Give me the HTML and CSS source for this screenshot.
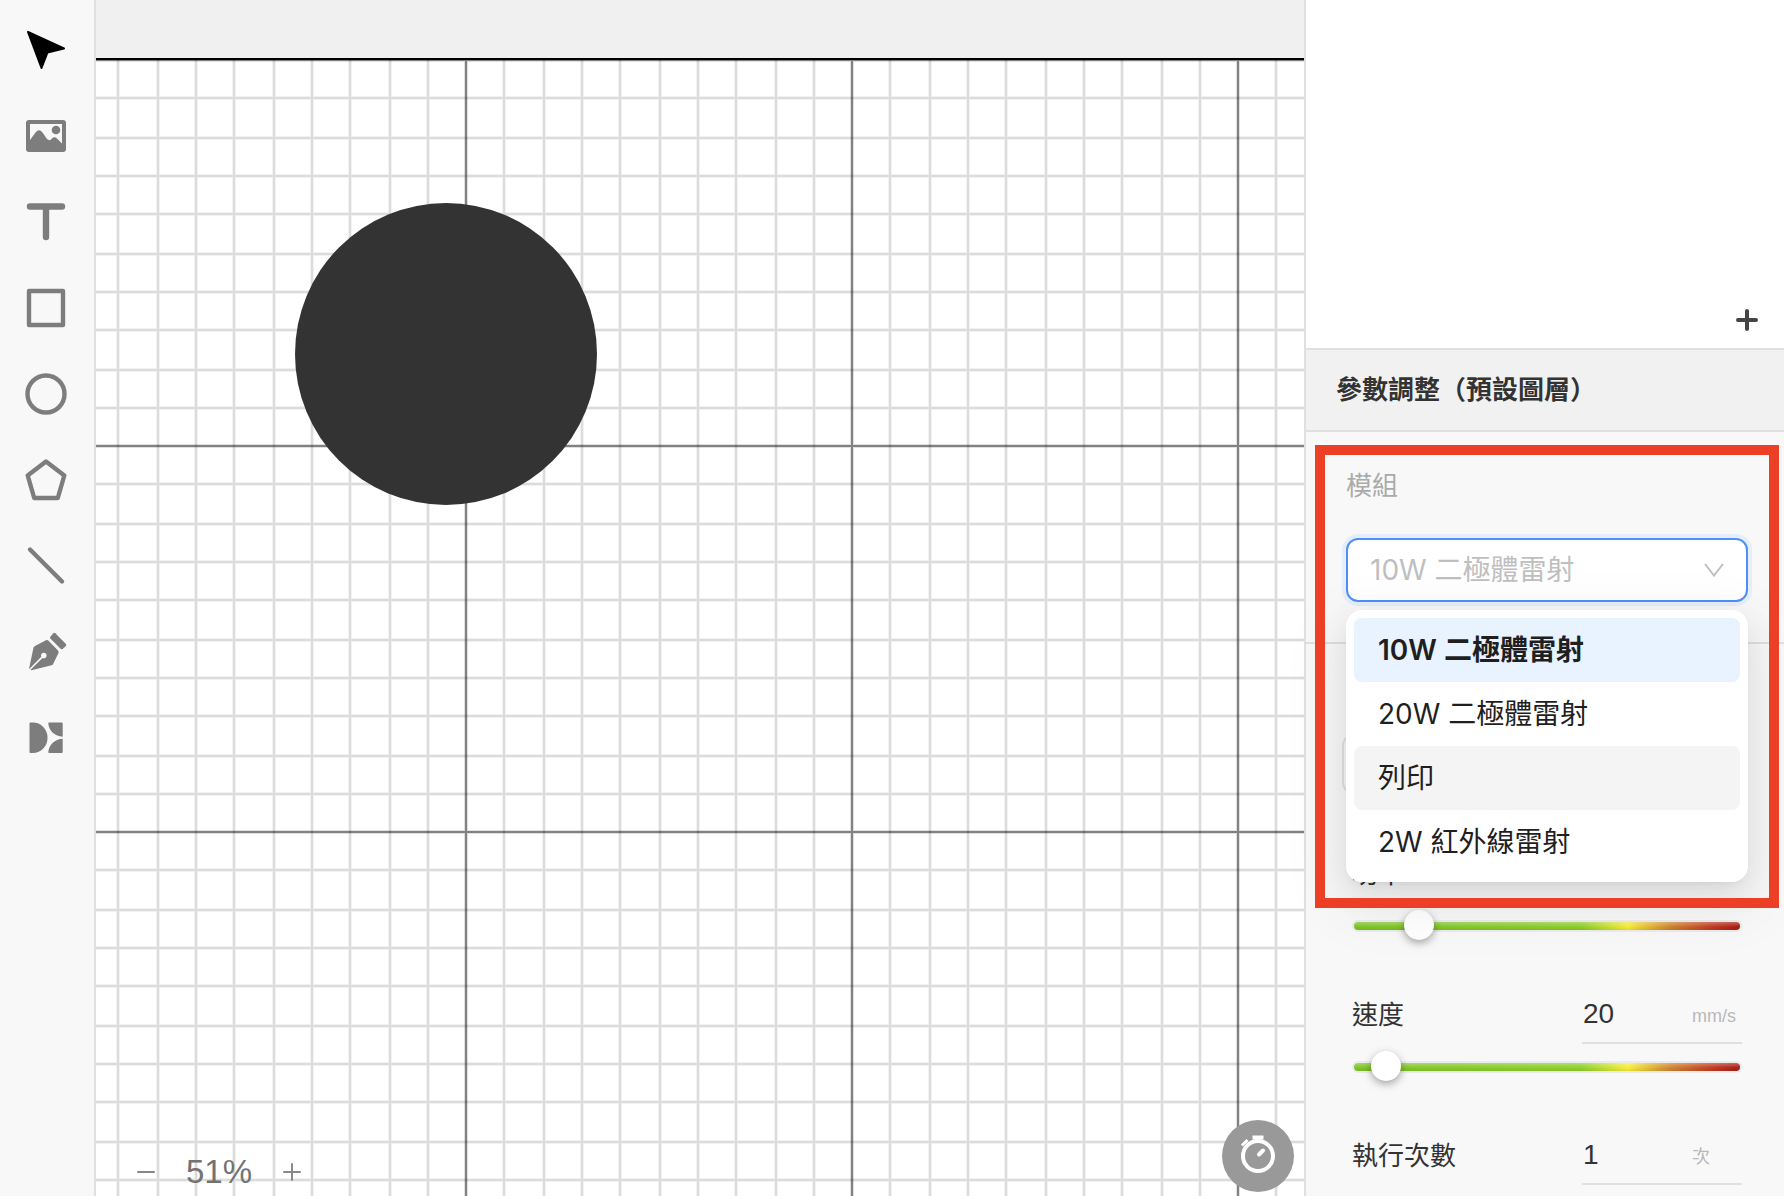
FILE: index.html
```html
<!DOCTYPE html>
<html lang="zh-Hant">
<head>
<meta charset="utf-8">
<title>參數調整</title>
<link rel="stylesheet" href="styles.css">
</head>
<body>
<div class="app">
  <nav class="toolbar" aria-label="工具">
    <button class="tool tool-active" aria-label="選取"><svg viewBox="0 0 48 48"><path class="fill round" d="M6 6 42 22.500 25.500 26.500 19.500 42Z"/></svg></button>
    <button class="tool" aria-label="圖片"><svg viewBox="0 0 48 48"><path class="fill" fill-rule="evenodd" d="M7 8H41Q44 8 44 11V37Q44 40 41 40H7Q4 40 4 37V11Q4 8 7 8ZM8 12V28L13.500 20.500Q17 16 20.500 20.500L25 27Q27.500 29 29 27.500Q32 23.500 35 26.500L40 31.500V12Z"/><circle class="fill" cx="34" cy="18" r="4.300"/></svg></button>
    <button class="tool" aria-label="文字"><svg viewBox="0 0 48 48"><path class="line thick" d="M8 8.500H40M24 9V39"/></svg></button>
    <button class="tool" aria-label="矩形"><svg viewBox="0 0 48 48"><rect class="line" x="7" y="7" width="34" height="34"/></svg></button>
    <button class="tool" aria-label="橢圓"><svg viewBox="0 0 48 48"><circle class="line" cx="24" cy="24" r="18.500"/></svg></button>
    <button class="tool" aria-label="多邊形"><svg viewBox="0 0 48 48"><path class="line" d="M24 5.500 42.300 19.500 35.800 42H12.200L5.700 19.500Z"/></svg></button>
    <button class="tool" aria-label="線段"><svg viewBox="0 0 48 48"><path class="line" d="M8 7.500 40 39.500"/></svg></button>
    <button class="tool" aria-label="鋼筆"><svg viewBox="0 0 48 48"><path class="fill" fill-rule="evenodd" d="M7 41 11.500 19.500Q12 18.500 13 18L24 12.200Q25.500 11.800 26.500 12.700L36 22.500Q37 23.500 36.500 25L31 36.200Q30.500 37 29.500 37.300L9.500 42.300 8.500 41.800 20.500 30A2.800 2.800 0 1 0 19.300 28.800L7.500 40.800Z"/><path class="fill" d="M28.300 8.700 31.500 5.200Q32.400 4.500 33.300 5.200L44 16Q44.600 17 44 17.800L40.700 21Q39.700 21.700 38.900 21L28.300 10.400Q27.800 9.500 28.300 8.700Z"/></svg></button>
    <button class="tool" aria-label="元件"><svg viewBox="0 0 48 48"><path class="fill" d="M8.500 8.500H11A14.500 15.200 0 0 1 11 39H8.500Q7.500 39 7.500 38V9.500Q7.500 8.500 8.500 8.500ZM27 8.500H39.700Q40.700 8.500 40.700 9.500V22.700C33 22.500 26.800 16.500 26.300 9.500Q26.300 8.500 27 8.500ZM40.700 24.800V38Q40.700 39 39.700 39H27Q26.300 39 26.300 38C26.800 31 33 25 40.700 24.800Z"/></svg></button>
  </nav>

  <main class="workspace">
    <svg class="artboard" width="100%" height="100%" aria-hidden="true">
      <defs>
        <pattern id="grid" x="-16" y="60" width="386" height="386" patternUnits="userSpaceOnUse">
          <path class="grid-soft" d="M38 0V386M78 0V386M116 0V386M154 0V386M194 0V386M232 0V386M270 0V386M310 0V386M348 0V386M0 38H386M0 78H386M0 116H386M0 154H386M0 194H386M0 232H386M0 270H386M0 310H386M0 348H386"/>
          <path class="grid-minor" d="M38 0V386M78 0V386M116 0V386M154 0V386M194 0V386M232 0V386M270 0V386M310 0V386M348 0V386M0 38H386M0 78H386M0 116H386M0 154H386M0 194H386M0 232H386M0 270H386M0 310H386M0 348H386"/>
          <path class="grid-major-soft" d="M0 0V386M386 0V386M0 0H386M0 386H386"/>
          <path class="grid-major" d="M0 0V386M386 0V386M0 0H386M0 386H386"/>
        </pattern>
      </defs>
      <rect class="paper" y="60" width="100%" height="100%"/>
      <rect fill="url(#grid)" y="60" width="100%" height="100%"/>
      <rect y="58" width="100%" height="2"/>
      <circle class="shape" cx="350" cy="354" r="151"/>
    </svg>
    <div class="statusbar">
      <div class="zoom">
        <button class="zoom-button" aria-label="縮小"><svg viewBox="0 0 20 20"><path d="M2 10H18"/></svg></button>
        <span class="zoom-value">51%</span>
        <button class="zoom-button" aria-label="放大"><svg viewBox="0 0 20 20"><path d="M2 10H18M10 2V18"/></svg></button>
      </div>
      <button class="timer" aria-label="預估時間"><svg viewBox="0 0 72 72"><circle cx="36" cy="36" r="15"/><path class="knob" d="M32.500 17.500H39.500"/><path class="knob small" d="M21 24.500 24.500 21"/><path d="M37 34.500 41 30.500"/></svg></button>
    </div>
  </main>

  <aside class="panel">
    <section class="layers">
      <button class="add" aria-label="新增圖層"><svg viewBox="0 0 24 24"><path d="M3 12H21M12 3V21"/></svg></button>
    </section>
    <h2 class="panel-title">參數調整（預設圖層）</h2>
    <section class="module">
      <label class="module-label" for="module">模組</label>
      <div class="select-wrap">
        <select id="module" class="select">
          <option>10W 二極體雷射</option>
          <option>20W 二極體雷射</option>
          <option>列印</option>
          <option>2W 紅外線雷射</option>
        </select>
        <svg class="chevron" viewBox="0 0 20 14"><path d="M1 1 10 12.500 19 1"/></svg>
        <ul class="menu" role="listbox" aria-label="模組">
          <li class="option option-selected" role="option" aria-selected="true">10W 二極體雷射</li>
          <li class="option" role="option">20W 二極體雷射</li>
          <li class="option option-hover" role="option">列印</li>
          <li class="option" role="option">2W 紅外線雷射</li>
        </ul>
      </div>
    </section>
    <section class="params">
      <button class="preset" aria-label="預設參數"></button>
      <div class="param">
        <div class="param-head">
          <label class="param-label" for="power">功率</label>
          <div class="field"><input id="power" class="value" value="15"><span class="unit">%</span></div>
        </div>
        <input class="slider" type="range" aria-label="功率" min="1" max="100" value="15">
      </div>
      <div class="param">
        <div class="param-head">
          <label class="param-label" for="speed">速度</label>
          <div class="field"><input id="speed" class="value" value="20"><span class="unit">mm/s</span></div>
        </div>
        <input class="slider" type="range" aria-label="速度" min="1" max="400" value="20">
      </div>
      <div class="param">
        <div class="param-head">
          <label class="param-label" for="repeat">執行次數</label>
          <div class="field"><input id="repeat" class="value" value="1"><span class="unit">次</span></div>
        </div>
      </div>
    </section>
    <div class="highlight" aria-hidden="true"></div>
  </aside>
</div>
</body>
</html>
```
FILE: styles.css
```css
* { box-sizing: border-box; }

body {
  margin: 0;
  color: #333;
  font-family: "Liberation Sans", "Noto Sans CJK TC", sans-serif;
}

button {
  padding: 0;
  border: 0;
  background: none;
}

svg { display: block; }

.app {
  display: flex;
  min-height: 100vh;
  overflow: hidden;
}

/* Tool column */
.toolbar {
  flex: none;
  width: 96px;
  padding-top: 7px;
  border-right: 2px solid #e0e0e0;
  background: #f8f8f8;
}

.tool {
  display: grid;
  place-items: center;
  width: 92px;
  height: 86px;
  color: #7d7d7d;
}

.tool-active { color: #000; }
.tool svg { width: 48px; height: 48px; }
.fill { fill: currentColor; }
.round { stroke: currentColor; stroke-width: 2; stroke-linejoin: round; }
.line {
  fill: none;
  stroke: currentColor;
  stroke-width: 4.4;
  stroke-linecap: round;
  stroke-linejoin: round;
}
.thick { stroke-width: 6.4; }

/* Canvas */
.workspace {
  position: relative;
  display: flex;
  flex: 1;
  flex-direction: column;
  justify-content: flex-end;
  min-width: 0;
  background: #f0f0f0;
}

.artboard { position: absolute; inset: 0; }
.paper { fill: #fff; }
.grid-soft { fill: none; stroke: #000; stroke-opacity: .05; stroke-width: 4; }
.grid-minor { fill: none; stroke: #000; stroke-opacity: .09; stroke-width: 2; }
.grid-major-soft { fill: none; stroke: #000; stroke-opacity: .12; stroke-width: 4; }
.grid-major { fill: none; stroke: #000; stroke-opacity: .42; stroke-width: 2; }
.shape { fill: #333; }

.statusbar {
  position: relative;
  display: flex;
  align-items: center;
  justify-content: space-between;
  padding: 0 10px 4px 40px;
}

.zoom {
  display: flex;
  align-items: center;
  gap: 30px;
  padding-top: 32px;
}

.zoom-button svg {
  width: 20px;
  height: 20px;
  fill: none;
  stroke: #888;
  stroke-width: 2;
  stroke-linecap: round;
}

.zoom-value { color: #737373; font-size: 33px; line-height: 36px; }

.timer {
  width: 72px;
  height: 72px;
  border-radius: 50%;
  background: #999;
}

.timer svg {
  fill: none;
  stroke: #fff;
  stroke-width: 4;
  stroke-linecap: round;
}
.timer .knob { stroke-linecap: square; }
.timer .small { stroke-width: 3; }

/* Right panel */
.panel {
  position: relative;
  flex: none;
  width: 480px;
  border-left: 2px solid #e0e0e0;
  background: #f8f8f8;
}

.layers {
  display: flex;
  align-items: flex-end;
  justify-content: flex-end;
  height: 348px;
  padding: 16px 25px;
  background: #fff;
}

.add svg {
  width: 24px;
  height: 24px;
  fill: none;
  stroke: #444;
  stroke-width: 4;
  stroke-linecap: round;
}

.panel-title {
  margin: 0;
  padding: 1px 30px 0;
  border: solid #e0e0e0;
  border-width: 2px 0;
  background: #f1f1f1;
  font-size: 26px;
  font-weight: 700;
  line-height: 79px;
}

.module {
  padding: 34px 36px 40px 40px;
  border-bottom: 2px solid #e0e0e0;
}

.module-label {
  display: block;
  margin-bottom: 32px;
  color: #aaa;
  font-size: 26px;
  line-height: 40px;
}

.select-wrap { position: relative; }

.select {
  display: block;
  width: 100%;
  height: 64px;
  padding: 0 22px;
  border: 2px solid #4f8ff7;
  border-radius: 12px;
  outline: 0;
  background: #fff;
  box-shadow: 0 0 0 4px #e5eefa;
  color: #bfbfbf;
  font: 28px Inter, "Noto Sans CJK TC", sans-serif;
  appearance: none;
}

.chevron {
  position: absolute;
  top: 25px;
  right: 24px;
  width: 20px;
  height: 14px;
  fill: none;
  stroke: #bfbfbf;
  stroke-width: 2;
  pointer-events: none;
}

.menu {
  position: absolute;
  top: 72px;
  right: 0;
  left: 0;
  z-index: 1;
  margin: 0;
  padding: 8px;
  border-radius: 16px;
  background: #fff;
  box-shadow: 0 12px 32px rgba(0, 0, 0, .08), 0 6px 12px -8px rgba(0, 0, 0, .12), 0 18px 56px 16px rgba(0, 0, 0, .05);
  color: #1f1f1f;
  font: 28px/64px Inter, "Noto Sans CJK TC", sans-serif;
  list-style: none;
}

.option {
  padding: 0 24px;
  border-radius: 8px;
}
.option-selected { background: #e8f3ff; font-weight: 600; }
.option-hover { background: #f4f4f4; }

.params { padding: 91px 42px 10px 36px; }

.preset {
  display: block;
  width: 100%;
  height: 58px;
  border: 2px solid #e0e0e0;
  border-radius: 10px;
}

.param {
  height: 141px;
  padding-left: 12px;
}
.preset + .param { margin-top: 52px; }
.param:last-child { height: auto; }

.param-head {
  display: flex;
  align-items: center;
  justify-content: space-between;
  margin-left: -2px;
}

.param-label { font-size: 26px; line-height: 58px; }

.field {
  display: grid;
  grid-template-columns: 110px 1fr;
  align-items: center;
  width: 160px;
  height: 58px;
  border-bottom: 2px solid #e0e0e0;
}

.value {
  width: 100%;
  height: 54px;
  padding: 0 0 0 1px;
  border: 0;
  outline: 0;
  background: none;
  color: #333;
  font: 28px "Liberation Sans", Arial, sans-serif;
}

.unit {
  padding-top: 4px;
  color: #b8b8b8;
  font-size: 18px;
  line-height: 24px;
}

.slider {
  display: block;
  width: 100%;
  height: 30px;
  margin: 8px 0 0;
  padding-right: 2px;
  background: none;
  appearance: none;
}

.slider::-webkit-slider-runnable-track {
  height: 8px;
  border-radius: 4px;
  background:
    linear-gradient(rgba(255, 255, 255, .3), rgba(255, 255, 255, 0) 60%, rgba(0, 0, 0, .08)),
    linear-gradient(90deg, #7fc52a, #8fd12c 59%, #f8ee3a 71%, #d08531 82%, #c23b22 93%, #a81d15);
  box-shadow: 0 0 0 2px #ebebeb;
}

.slider::-webkit-slider-thumb {
  width: 30px;
  height: 30px;
  margin-top: -12px;
  border-radius: 50%;
  background: #fff;
  box-shadow: 0 3px 8px rgba(0, 0, 0, .35);
  appearance: none;
}

/* Callout frame over the module picker */
.highlight {
  position: absolute;
  top: 445px;
  right: 5px;
  left: 9px;
  z-index: 2;
  height: 463px;
  border: 10px solid #eb4026;
  pointer-events: none;
}
```
